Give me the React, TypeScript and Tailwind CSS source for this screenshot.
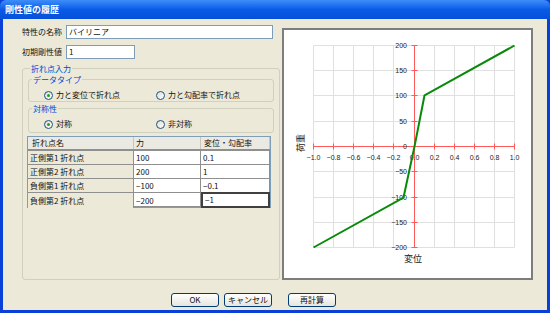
const rows = [
  ['正側第1 折れ点', '100', '0.1'],
  ['正側第2 折れ点', '200', '1'],
  ['負側第1 折れ点', '−100', '−0.1'],
  ['負側第2 折れ点', '−200', '−1'],
]

const xTicks = [-1, -0.8, -0.6, -0.4, -0.2, 0, 0.2, 0.4, 0.6, 0.8, 1]
const yTicks = [200, 150, 100, 50, 0, -50, -100, -150, -200]

// plot coordinates are in page pixels, the viewBox shifts them into the box
const X = (v: number) => Math.round(313 + (v + 1) * 100.5) + 0.5
const Y = (f: number) => Math.round(146 - f * 0.507) + 0.5

function Chart() {
  const curve = [
    [-1, -200],
    [-0.1, -100],
    [0, 0],
    [0.1, 100],
    [1, 200],
  ]
  return (
    <svg width={247} height={248} viewBox="284 30 247 248" className="block">
      {xTicks.map((v) => (
        <line key={'gx' + v} x1={X(v)} x2={X(v)} y1={Y(200)} y2={Y(-200)} stroke="#e0e0e0" />
      ))}
      {yTicks.map((f) => (
        <line key={'gy' + f} x1={X(-1)} x2={X(1)} y1={Y(f)} y2={Y(f)} stroke="#e0e0e0" />
      ))}
      <line x1={X(-1)} x2={X(1)} y1={Y(0)} y2={Y(0)} stroke="#ff5a5a" />
      <line x1={X(0)} x2={X(0)} y1={Y(200)} y2={Y(-200)} stroke="#ff5a5a" />
      {xTicks.map((v) => (
        <line key={'tx' + v} x1={X(v)} x2={X(v)} y1={Y(0) - 3} y2={Y(0) + 3} stroke="#ff5a5a" />
      ))}
      {yTicks.map((f) => (
        <line key={'ty' + f} x1={X(0) - 3} x2={X(0) + 3} y1={Y(f)} y2={Y(f)} stroke="#ff5a5a" />
      ))}
      <g fontFamily="Liberation Sans, sans-serif" fontSize="7" fill="#222">
        {yTicks.map((f) => (
          <text key={'ly' + f} x={407} y={Y(f) + 2.5} textAnchor="end">
            {f < 0 ? '−' + Math.abs(f) : f}
          </text>
        ))}
        {xTicks.map((v) => (
          <text key={'lx' + v} x={X(v)} y={159.5} textAnchor="middle">
            {v < 0 ? '−' + Math.abs(v).toFixed(1) : v.toFixed(1)}
          </text>
        ))}
      </g>
      <g fontFamily="Noto Sans CJK JP, sans-serif" fontSize="9" fill="#222">
        <text x={301} y={146} textAnchor="middle" transform="rotate(-90 301 143)">荷重</text>
        <text x={413} y={262} textAnchor="middle">変位</text>
      </g>
      <polyline
        points={curve.map(([v, f]) => `${X(v)},${Y(f)}`).join(' ')}
        fill="none"
        stroke="#0a8a0a"
        strokeWidth={2}
      />
    </svg>
  )
}

function Radio({ checked, label }: { checked?: boolean; label: string }) {
  return (
    <div className="flex items-center gap-[3px] w-[112px] h-[10px]">
      <span className="w-[9px] h-[9px] rounded-full border border-[#1c5180] bg-gradient-to-br from-[#dcdcd6] to-white flex items-center justify-center">
        {checked && <span className="w-[3px] h-[3px] rounded-full bg-[#21a121]" />}
      </span>
      <span>{label}</span>
    </div>
  )
}

function Button({ label }: { label: string }) {
  return (
    <div className="w-[48px] h-[14px] rounded-[3px] border border-[#003c74] bg-gradient-to-b from-white to-[#e6e5de] flex items-center justify-center text-[8px] leading-none">
      {label}
    </div>
  )
}

export default function App() {
  return (
    <div className="w-[550px] h-[313px] flex flex-col bg-[#0a3fd8] font-['Noto_Sans_CJK_JP',sans-serif] text-[8px] text-[#111] overflow-hidden">
      <div className="h-[19px] shrink-0 bg-gradient-to-b from-[#3d8ef8] via-[#0a5ae8] to-[#0550d8] rounded-t-[6px] flex items-center px-[5px] text-white font-bold text-[9px]">
        剛性値の履歴
      </div>
      <div className="flex-1 mx-[3px] mb-[3px] bg-[#ece9d8] flex flex-col">
        <div className="flex gap-[4px] pl-[19px]">
          <div className="w-[256px] pt-[6px] flex flex-col">
            <div className="flex items-center h-[14px]">
              <span className="w-[44px]">特性の名称</span>
              <div className="w-[207px] h-[14px] border border-[#7f9db9] bg-white flex items-center px-[2px]">バイリニア</div>
            </div>
            <div className="flex items-center h-[14px] mt-[6px]">
              <span className="w-[44px]">初期剛性値</span>
              <div className="w-[69px] h-[14px] border border-[#7f9db9] bg-white flex items-center px-[2px]">1</div>
            </div>
            <fieldset className="mt-[5px] h-[216px] border border-[#d0d0bf] rounded-[3px] px-[4px] pt-[2px] pb-[7px] flex flex-col">
              <legend className="ml-[3px] px-[1px] leading-[9px] text-[#0046d5]">折れ点入力</legend>
              <fieldset className="mx-[1px] border border-[#d0d0bf] rounded-[3px] pt-[6px] pb-[1px]">
                <legend className="ml-[3px] px-[1px] leading-[9px] text-[#0046d5]">データタイプ</legend>
                <div className="flex pl-[15px]">
                  <Radio checked label="力と変位で折れ点" />
                  <Radio label="力と勾配率で折れ点" />
                </div>
              </fieldset>
              <fieldset className="mx-[1px] mt-[2px] border border-[#d0d0bf] rounded-[3px] pt-[6px] pb-[3px]">
                <legend className="ml-[3px] px-[1px] leading-[9px] text-[#0046d5]">対称性</legend>
                <div className="flex pl-[15px]">
                  <Radio checked label="対称" />
                  <Radio label="非対称" />
                </div>
              </fieldset>
              <div className="mt-[3px] mr-[4px] flex-1 border border-[#7f9db9] bg-white">
                <div className="grid grid-cols-[106px_67px_69px] h-[14px] bg-[#ebeae2] border-b-2 border-[#8f8f8f]">
                  <div className="pl-[4px] flex items-center border-r border-[#c9c7ba]">折れ点名</div>
                  <div className="pl-[2px] flex items-center border-r border-[#c9c7ba]">力</div>
                  <div className="pl-[3px] flex items-center border-r border-[#c9c7ba]">変位・勾配率</div>
                </div>
                {rows.map((r, i) => (
                  <div key={r[0]} className="grid grid-cols-[106px_67px_69px] h-[14px] border-b border-[#8f8f8f]">
                    <div className="pl-[2px] flex items-center bg-[#ece9d8] border-r border-[#8f8f8f]">{r[0]}</div>
                    <div className="pl-[2px] flex items-center border-r border-[#8f8f8f]">{r[1]}</div>
                    <div
                      className={
                        i === 3
                          ? 'pl-[2px] flex items-center border-2 border-[#404040] -mt-px'
                          : 'pl-[2px] flex items-center border-r border-[#8f8f8f]'
                      }
                    >
                      {r[2]}
                    </div>
                  </div>
                ))}
              </div>
            </fieldset>
          </div>
          <div className="mt-[9px] w-[251px] h-[252px] border-2 border-[#7d7d7d] bg-white">
            <Chart />
          </div>
        </div>
        <div className="flex pl-[168px] mt-[13px] gap-[5px]">
          <Button label="OK" />
          <Button label="キャンセル" />
          <div className="w-[6px]" />
          <Button label="再計算" />
        </div>
      </div>
    </div>
  )
}
